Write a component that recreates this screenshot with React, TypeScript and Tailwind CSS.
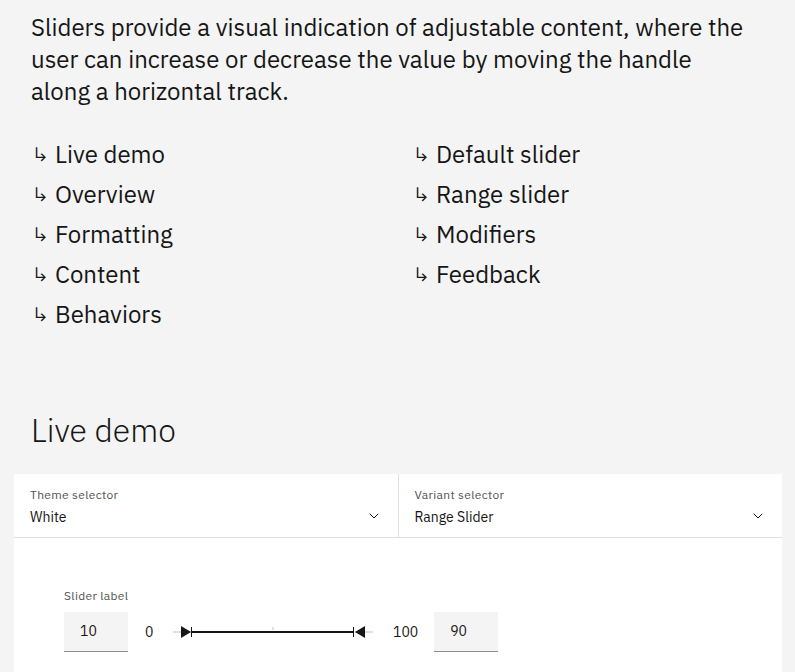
import React from 'react';
import { ChevronDown } from 'lucide-react';

const font = { fontFamily: '"IBM Plex Sans", "Noto Sans", Arial, sans-serif' };

const leftLinks = ['Live demo', 'Overview', 'Formatting', 'Content', 'Behaviors'];
const rightLinks = ['Default slider', 'Range slider', 'Modifiers', 'Feedback'];

const AnchorLink = ({ label }: { label: string }) => (
  <a href="#" className="flex items-center h-[40px] text-[24px] text-[#161616] no-underline">
    <span className="w-[23px] text-[20px] ml-[1px]">↳</span>
    <span>{label}</span>
  </a>
);

const Select = ({ label, value, divider }: { label: string; value: string; divider?: boolean }) => (
  <div className={`flex-1 flex items-end justify-between pl-4 pr-4 pb-[9px] ${divider ? 'border-r border-[#e0e0e0]' : ''}`}>
    <div className="flex flex-col">
      <span className="text-[12px] leading-[16px] text-[#525252] tracking-[0.32px]">{label}</span>
      <span className="text-[14px] leading-[22px] text-[#161616] mt-[3px]">{value}</span>
    </div>
    <ChevronDown className="w-4 h-4 text-[#161616] mb-[4px]" strokeWidth={1.5} />
  </div>
);

const RangeTrack = () => (
  <div className="relative w-[200px] h-[20px] ml-[19px] mr-[20px]">
    <div className="absolute left-0 right-0 top-[9px] h-[2px] bg-[#e0e0e0]" />
    <div className="absolute left-[99px] top-[5px] w-[2px] h-[3px] bg-[#e0e0e0]" />
    <div className="absolute left-[19px] right-[20px] top-[9px] h-[2px] bg-[#161616]" />
    <div className="absolute left-[18px] top-[5px] w-[1px] h-[10px] bg-[#161616]" />
    <div className="absolute right-[19px] top-[5px] w-[1px] h-[10px] bg-[#161616]" />
    <svg className="absolute left-[8px] top-[4px]" width="10" height="12" viewBox="0 0 10 12">
      <path d="M0 0 L10 6 L0 12 Z" fill="#161616" />
    </svg>
    <svg className="absolute right-[8px] top-[4px]" width="10" height="12" viewBox="0 0 10 12">
      <path d="M10 0 L0 6 L10 12 Z" fill="#161616" />
    </svg>
  </div>
);

const NumberBox = ({ value }: { value: string }) => (
  <div className="w-[64px] h-[40px] bg-[#f4f4f4] border-b border-[#8d8d8d] flex items-center pl-4 text-[14px] text-[#161616]">
    {value}
  </div>
);

export default function App() {
  return (
    <div className="min-h-[672px] bg-[#f4f4f4] overflow-hidden" style={font}>
      <div className="pl-[31px] pt-[11px]">
        <p className="text-[24px] leading-[32px] text-[#161616]">
          Sliders provide a visual indication of adjustable content, where the
          <br />
          user can increase or decrease the value by moving the handle
          <br />
          along a horizontal track.
        </p>

        <div className="grid grid-cols-[381px_1fr] mt-[27px]">
          <div className="flex flex-col">
            {leftLinks.map((l) => (
              <AnchorLink key={l} label={l} />
            ))}
          </div>
          <div className="flex flex-col">
            {rightLinks.map((l) => (
              <AnchorLink key={l} label={l} />
            ))}
          </div>
        </div>

        <h2 className="relative mt-[76px] text-[32px] leading-[40px] font-light text-[#161616]">
          Live demo
        </h2>
      </div>

      <div className="ml-[14px] mt-[24px] w-[768px] bg-white">
        <div className="flex h-[64px] border-b border-[#e0e0e0]">
          <Select label="Theme selector" value="White" divider />
          <Select label="Variant selector" value="Range Slider" />
        </div>
        <div className="pl-[50px] pt-[50px] pb-[40px]">
          <div className="text-[12px] leading-[16px] text-[#525252] tracking-[0.32px]">Slider label</div>
          <div className="flex items-center mt-[8px]">
            <NumberBox value="10" />
            <span className="text-[14px] text-[#161616] ml-[17px] w-[9px]">0</span>
            <RangeTrack />
            <span className="text-[14px] text-[#161616]">100</span>
            <div className="ml-[16px]">
              <NumberBox value="90" />
            </div>
          </div>
        </div>
      </div>
    </div>
  );
}
